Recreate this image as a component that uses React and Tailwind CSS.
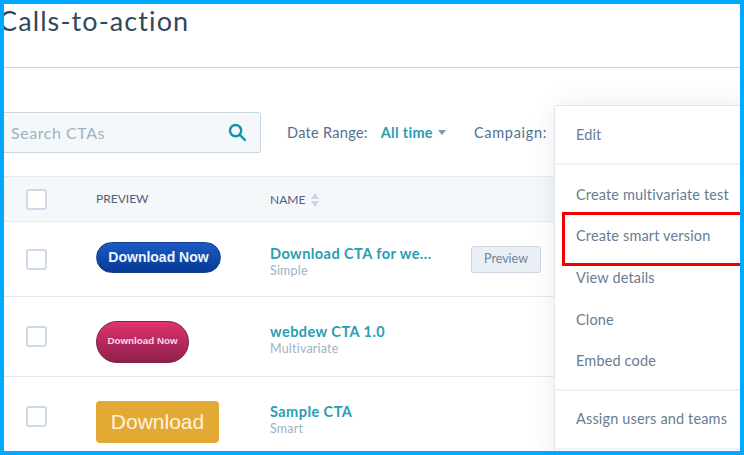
import React from "react";

const rows = [
  { name: "Download CTA for we...", type: "Simple", kind: "blue", h: "h-[75px]", preview: true },
  { name: "webdew CTA 1.0", type: "Multivariate", kind: "pink", h: "h-[80px]" },
  { name: "Sample CTA", type: "Smart", kind: "gold", h: "h-[80px]" },
];

const Checkbox = () => (
  <div className="w-[21px] h-[21px] rounded-[3px] border-2 border-[#cfdae8] bg-white" />
);

const CtaImage = ({ kind }) => {
  if (kind === "blue") {
    return (
      <div className="-mt-[4px] w-[125px] h-[31px] rounded-full bg-gradient-to-b from-[#1c5cc4] to-[#063a96] border border-[#123f88] flex items-center justify-center text-[#f0f4fb] font-bold text-[14px] font-['Liberation_Sans',sans-serif]">
        Download Now
      </div>
    );
  }
  if (kind === "pink") {
    return (
      <div className="mt-[10px] w-[93px] h-[42px] rounded-full bg-gradient-to-b from-[#e2336f] to-[#8e1f4c] border border-[#7c2347] flex items-center justify-center text-[#f6dbe5] font-bold text-[9.8px] font-['Liberation_Sans',sans-serif]">
        Download Now
      </div>
    );
  }
  return (
    <div className="mt-[10px] w-[123px] h-[42px] rounded-[4px] bg-[#e3a935] flex items-center justify-center text-[#fdf3dc] text-[21px] font-['Liberation_Sans',sans-serif]">
      Download
    </div>
  );
};

const MenuItem = ({ children, className = "" }) => (
  <div className={`pl-[21px] text-[14.5px] tracking-[0.15px] text-[#687c92] whitespace-nowrap ${className}`}>{children}</div>
);

export default function App() {
  return (
    <div className="relative w-[744px] h-[455px] overflow-hidden bg-white border-4 border-[#00a8ff] font-['Lato',sans-serif] box-border">
      {/* Title */}
      <div className="h-[64px] border-b border-[#cbd6e2] overflow-hidden">
        <h1 className="ml-[-5px] text-[27px] leading-[34px] tracking-[1.1px] text-[#33475b] font-normal">
          Calls-to-action
        </h1>
      </div>

      {/* Filters */}
      <div className="h-[108px] flex items-end gap-[26px] pb-[23px]">
        <div className="w-[257px] h-[41px] flex items-center justify-between pl-[7px] pr-[13px] bg-[#f5f8fa] border border-[#cbd6e2] border-l-0 rounded-r-[3px]">
          <span className="text-[16px] text-[#9fb1c4] tracking-[0.55px]">Search CTAs</span>
          <svg width="19" height="19" viewBox="0 0 19 19" fill="none" stroke="#0f93a8" strokeWidth="2.4">
            <circle cx="7.6" cy="7.6" r="5.6" />
            <path d="M11.8 11.8 L17 17" strokeLinecap="round" />
          </svg>
        </div>
        <div className="h-[41px] flex items-center gap-[13px] text-[14.5px] tracking-[0.3px] text-[#516f90]">
          <span>Date Range:</span>
          <span className="flex items-center gap-[5px] font-bold text-[#2a9db2]">
            All time
            <span className="w-0 h-0 border-x-[4.5px] border-x-transparent border-t-[5px] border-t-[#7c98b6]" />
          </span>
          <span className="ml-[15px] tracking-[0.7px]">Campaign:</span>
        </div>
      </div>

      {/* Table header */}
      <div className="h-[46px] flex items-center bg-[#f5f8fa] border-y border-[#e3e9f0]">
        <div className="w-[92px] pl-[22px]">
          <Checkbox />
        </div>
        <div className="w-[174px] text-[12px] text-[#4f6079]">PREVIEW</div>
        <div className="flex items-center gap-[6px] text-[12px] text-[#4f6079] mt-[1px]">
          NAME
          <span className="flex flex-col gap-[2px]">
            <span className="w-0 h-0 border-x-[4px] border-x-transparent border-b-[6px] border-b-[#cbd6e2]" />
            <span className="w-0 h-0 border-x-[4px] border-x-transparent border-t-[6px] border-t-[#cbd6e2]" />
          </span>
        </div>
      </div>

      {/* Rows */}
      {rows.map((row) => (
        <div key={row.name} className={`${row.h} flex items-center border-b border-[#e3e9f0] last:border-b-0`}>
          <div className="w-[92px] pl-[22px]">
            <Checkbox />
          </div>
          <div className="w-[174px]">
            <CtaImage kind={row.kind} />
          </div>
          <div className="w-[201px] mt-[5px]">
            <div className="text-[14.5px] leading-[18px] font-bold text-[#2a9db2] tracking-[0.45px] whitespace-nowrap">
              {row.name}
            </div>
            <div className="text-[12.5px] leading-[15px] text-[#9fb1c4] tracking-[0.2px]">{row.type}</div>
          </div>
          {row.preview && (
            <div className="w-[70px] h-[27px] rounded-[3px] bg-[#eaf0f6] border border-[#cbd6e2] flex items-center justify-center text-[12.5px] text-[#6f839b] mt-[1px]">
              Preview
            </div>
          )}
        </div>
      ))}

      {/* Actions menu */}
      <div className="absolute left-[550px] top-[101px] w-[200px] h-[360px] bg-white border border-[#dfe6ee] rounded-tl-[3px] shadow-[0_0_24px_rgba(45,62,80,0.1)]">
        <div className="h-[59px] flex items-center border-b-2 border-[#eef1f5]">
          <MenuItem>Edit</MenuItem>
        </div>
        <div className="h-[226px] pt-[2px] flex flex-col justify-center gap-[23.6px] border-b-2 border-[#eef1f5]">
          <MenuItem className="leading-[18px]">Create multivariate test</MenuItem>
          <MenuItem className="leading-[18px]">Create smart version</MenuItem>
          <MenuItem className="leading-[18px]">View details</MenuItem>
          <MenuItem className="leading-[18px]">Clone</MenuItem>
          <MenuItem className="leading-[18px]">Embed code</MenuItem>
        </div>
        <div className="h-[59px] pb-[2px] flex items-center border-b-2 border-[#eef1f5]">
          <MenuItem>Assign users and teams</MenuItem>
        </div>
      </div>

      {/* Red highlight */}
      <div className="absolute left-[558px] top-[208px] w-[190px] h-[54px] border-[3px] border-[#f00000]" />
    </div>
  );
}
